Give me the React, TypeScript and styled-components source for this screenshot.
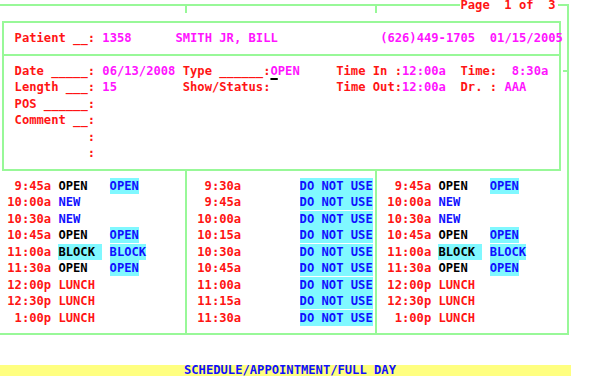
import React from 'react';
import styled, { createGlobalStyle } from 'styled-components';

const GREEN = '#98f898';
const RED = '#ff1414';
const MAGENTA = '#ff14ff';
const BLUE = '#1010ff';
const CYAN = '#80f8ff';
const YELLOW = '#ffff80';

type Tone = 'black' | 'blue' | 'red';

type Entry = { text: string; tone: Tone; hl?: boolean };

type Slot = { time: string; a?: Entry; b?: Entry };

const toneColor = (tone: Tone) => (tone === 'blue' ? BLUE : tone === 'red' ? RED : '#000');

const sp = (n: number) => ' '.repeat(n);

const GlobalStyle = createGlobalStyle`
  html, body {
    margin: 0;
    padding: 0;
    background: #fff;
  }
`;

const Screen = styled.div`
  width: 600px;
  height: 376px;
  overflow: hidden;
  background: #fff;
  display: flex;
  flex-direction: column;
  align-items: flex-start;
  font-family: 'DejaVu Sans Mono', 'Liberation Mono', monospace;
  font-weight: bold;
  font-size: 12.15px;
  line-height: 16.5px;
  white-space: pre;
`;

const Frame = styled.div`
  position: relative;
  box-sizing: border-box;
  width: 569px;
  margin-top: 4px;
  border-top: 2px solid ${GREEN};
  border-right: 2px solid ${GREEN};
  border-bottom: 2px solid ${GREEN};
`;

const PageLabel = styled.span`
  position: absolute;
  top: -8.5px;
  left: 63ch;
  padding-right: 2px;
  line-height: 15px;
  background: #fff;
  color: ${RED};
`;

const Tick = styled.span<{ $x: string }>`
  position: absolute;
  top: 0;
  left: calc(${(p) => p.$x} - 1px);
  width: 2px;
  height: 7px;
  background: ${GREEN};
`;

const SideTick = styled.span`
  position: absolute;
  top: 64px;
  right: 0;
  width: 4px;
  height: 2px;
  background: ${GREEN};
`;

const HeaderBox = styled.div`
  margin: 15px 6px 0 2px;
  border: 2px solid ${GREEN};
`;

const PatientRow = styled.div`
  padding: 6.75px 0 7.75px calc(2ch - 4px);
  border-bottom: 2px solid ${GREEN};
`;

const Details = styled.div`
  padding: 6.75px 0 7.25px calc(2ch - 4px);
`;

const Line = styled.div`
  height: 16.5px;
`;

const Label = styled.span`
  color: ${RED};
`;

const Value = styled.span`
  color: ${MAGENTA};
`;

const Cursor = styled.span`
  text-decoration: underline 2px #000;
  text-underline-offset: 3px;
`;

const Schedule = styled.div`
  display: grid;
  grid-template-columns: calc(25.5ch + 1px) 26ch 1fr;
`;

const Column = styled.div<{ $first?: boolean; $last?: boolean }>`
  padding: 6.5px 0 7px ${(p) => (p.$first ? '0' : 'calc(0.5ch - 1px)')};
  border-right: ${(p) => (p.$last ? 'none' : `2px solid ${GREEN}`)};
`;

const SlotRow = styled.div`
  display: grid;
  grid-template-columns: 6ch 6ch auto;
  column-gap: 1ch;
  padding-left: 1ch;
  height: 16.5px;
  align-items: center;
`;

const Time = styled.span`
  color: ${RED};
  text-align: right;
`;

const Status = styled.span<{ $tone: Tone; $hl?: boolean; $fill?: boolean }>`
  color: ${(p) => toneColor(p.$tone)};
  background: ${(p) => (p.$hl ? CYAN : 'transparent')};
  justify-self: ${(p) => (p.$fill ? 'stretch' : 'start')};
  height: 16px;
  line-height: 16px;
`;

const Bar = styled.div`
  box-sizing: border-box;
  width: 571px;
  height: 11px;
  margin-top: 30px;
  padding-left: 9px;
  line-height: 11px;
  background: ${YELLOW};
  color: ${BLUE};
  text-align: center;
`;

const dayColumn: Slot[] = [
  { time: '9:45a', a: { text: 'OPEN', tone: 'black' }, b: { text: 'OPEN', tone: 'blue', hl: true } },
  { time: '10:00a', a: { text: 'NEW', tone: 'blue' } },
  { time: '10:30a', a: { text: 'NEW', tone: 'blue' } },
  { time: '10:45a', a: { text: 'OPEN', tone: 'black' }, b: { text: 'OPEN', tone: 'blue', hl: true } },
  { time: '11:00a', a: { text: 'BLOCK', tone: 'black', hl: true }, b: { text: 'BLOCK', tone: 'blue', hl: true } },
  { time: '11:30a', a: { text: 'OPEN', tone: 'black' }, b: { text: 'OPEN', tone: 'blue', hl: true } },
  { time: '12:00p', a: { text: 'LUNCH', tone: 'red' } },
  { time: '12:30p', a: { text: 'LUNCH', tone: 'red' } },
  { time: '1:00p', a: { text: 'LUNCH', tone: 'red' } },
];

const blockedColumn: Slot[] = ['9:30a', '9:45a', '10:00a', '10:15a', '10:30a', '10:45a', '11:00a', '11:15a', '11:30a'].map(
  (time) => ({ time, b: { text: 'DO NOT USE', tone: 'blue', hl: true } })
);

const columns = [dayColumn, blockedColumn, dayColumn];

const SlotLine = ({ slot }: { slot: Slot }) => (
  <SlotRow>
    <Time>{slot.time}</Time>
    {slot.a ? (
      <Status $tone={slot.a.tone} $hl={slot.a.hl} $fill={slot.a.hl}>
        {slot.a.text}
      </Status>
    ) : (
      <span />
    )}
    {slot.b ? (
      <Status $tone={slot.b.tone} $hl={slot.b.hl}>
        {slot.b.text}
      </Status>
    ) : (
      <span />
    )}
  </SlotRow>
);

export default function App() {
  return (
    <>
      <GlobalStyle />
      <Screen>
        <Frame>
          <Tick $x="25.5ch" />
          <Tick $x="51.5ch" />
          <SideTick />
          <PageLabel>Page  1 of  3</PageLabel>

          <HeaderBox>
            <PatientRow>
              <Line>
                <Label>Patient __:</Label>
                {sp(1)}
                <Value>1358</Value>
                {sp(6)}
                <Value>SMITH JR, BILL</Value>
                {sp(14)}
                <Value>(626)449-1705</Value>
                {sp(2)}
                <Value>01/15/2005</Value>
              </Line>
            </PatientRow>
            <Details>
              <Line>
                <Label>Date _____:</Label>
                {sp(1)}
                <Value>06/13/2008</Value>
                {sp(1)}
                <Label>Type ______:</Label>
                <Value>
                  <Cursor>O</Cursor>PEN
                </Value>
                {sp(5)}
                <Label>Time In :</Label>
                <Value>12:00a</Value>
                {sp(2)}
                <Label>Time:</Label>
                {sp(2)}
                <Value>8:30a</Value>
              </Line>
              <Line>
                <Label>Length ___:</Label>
                {sp(1)}
                <Value>15</Value>
                {sp(9)}
                <Label>Show/Status:</Label>
                {sp(9)}
                <Label>Time Out:</Label>
                <Value>12:00a</Value>
                {sp(2)}
                <Label>Dr. :</Label>
                {sp(1)}
                <Value>AAA</Value>
              </Line>
              <Line>
                <Label>POS ______:</Label>
              </Line>
              <Line>
                <Label>Comment __:</Label>
              </Line>
              <Line>
                {sp(10)}
                <Label>:</Label>
              </Line>
              <Line>
                {sp(10)}
                <Label>:</Label>
              </Line>
            </Details>
          </HeaderBox>

          <Schedule>
            {columns.map((slots, i) => (
              <Column key={i} $first={i === 0} $last={i === columns.length - 1}>
                {slots.map((slot) => (
                  <SlotLine key={slot.time} slot={slot} />
                ))}
              </Column>
            ))}
          </Schedule>
        </Frame>

        <Bar>SCHEDULE/APPOINTMENT/FULL DAY</Bar>
      </Screen>
    </>
  );
}
